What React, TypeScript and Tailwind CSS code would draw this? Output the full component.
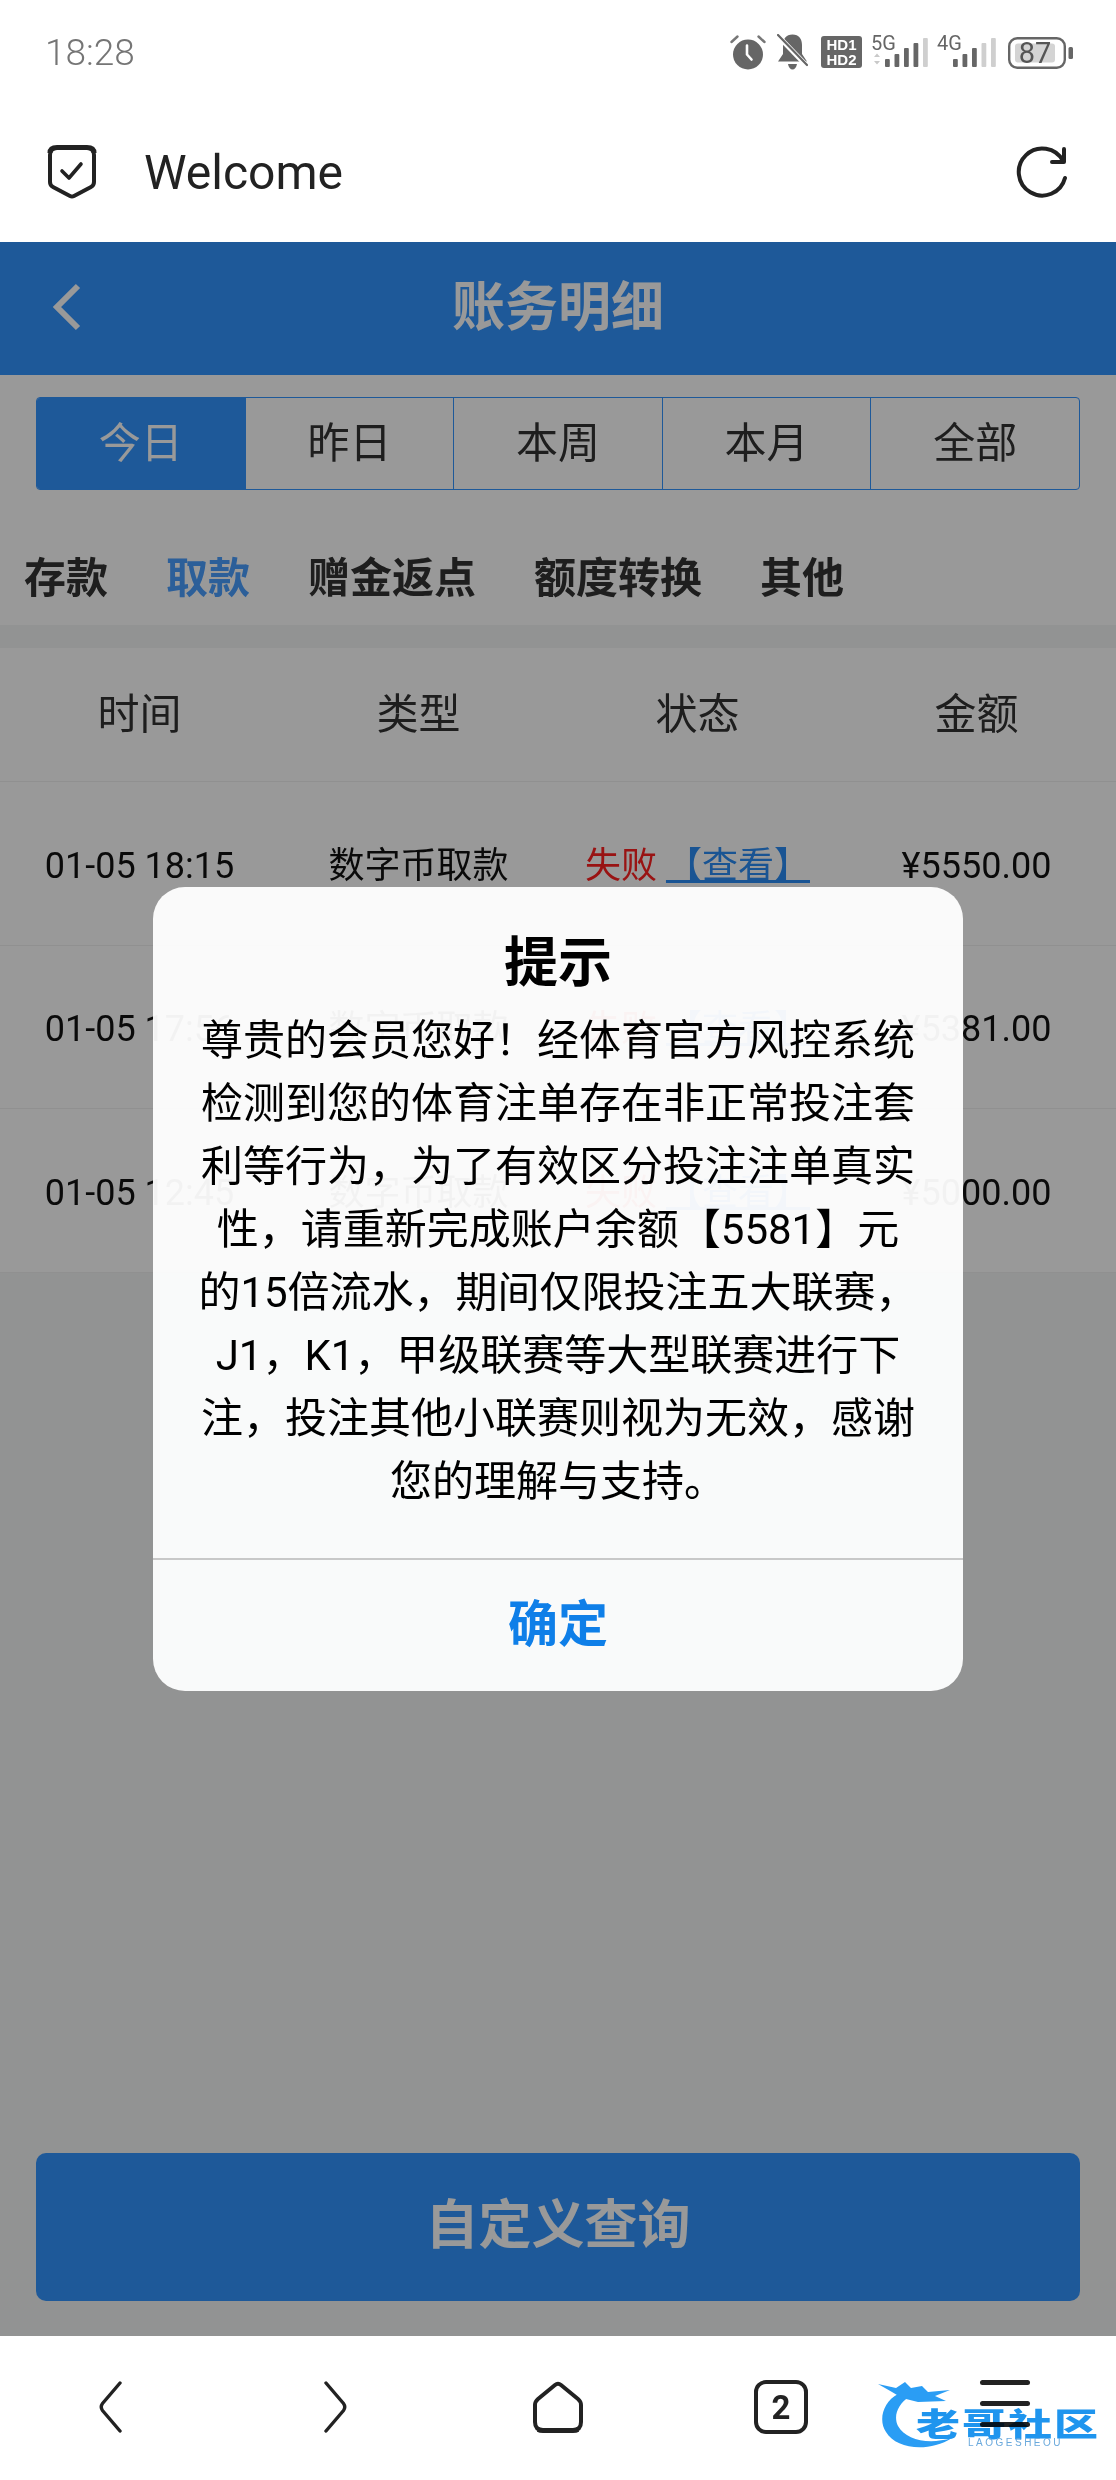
import React from "react";

const CJK = `font-['Roboto','Noto_Sans_CJK_SC',sans-serif]`;

function Alarm() {
  return (
    <svg width="36" height="36" viewBox="0 0 36 36" fill="none">
      <circle cx="18" cy="20.5" r="15" fill="#666" />
      <path d="M17 11.5V20.5L21.5 25.5" stroke="#fff" strokeWidth="2.6" strokeLinecap="round" strokeLinejoin="round" />
      <path d="M1.5 8L7.5 2.5M28.5 2.5L34.5 8" stroke="#777" strokeWidth="2.4" strokeLinecap="round" />
    </svg>
  );
}

function BellOff() {
  return (
    <svg width="31" height="36" viewBox="0 0 31 36" fill="none">
      <path d="M15.5 0.5C22 0.5 25 5 25 11V20L30 27.5H1L6 20V11C6 5 9 0.5 15.5 0.5Z" fill="#666" />
      <path d="M11 30H20C19.5 33.5 17.5 35.5 15.5 35.5C13.5 35.5 11.5 33.5 11 30Z" fill="#666" />
      <path d="M2 3L28 30" stroke="#fff" strokeWidth="5" />
      <path d="M1 1L30 31" stroke="#666" strokeWidth="2.2" strokeLinecap="round" />
    </svg>
  );
}

function Signal({ label, lit, first }: { label: string; lit: number; first: number }) {
  const xs = [0, 9.5, 19, 28.5, 38];
  const hs = [8, 13, 19, 24, 29];
  return (
    <svg width="59" height="36" viewBox="0 0 59 36" fill="none" className="overflow-visible">
      <text x="0" y="16" fontFamily="Roboto" fontSize="20" fill="#666">{label}</text>
      {label === "5G" && <path d="M3 23L6 19.5L9 23ZM3 27L6 30.5L9 27Z" fill="#c9c9c9" />}
      {xs.map((x, i) => (
        <rect key={x} x={first + x} y={33 - hs[i]} width="4.8" height={hs[i]} rx="1" fill={i < lit ? "#666" : "#cfcfcf"} />
      ))}
    </svg>
  );
}

function Battery() {
  return (
    <svg width="66" height="32" viewBox="0 0 66 32" fill="none">
      <rect x="1.2" y="1.2" width="55.6" height="29.6" rx="8" stroke="#666" strokeWidth="2.4" />
      <rect x="7" y="6.5" width="40" height="19" rx="3" fill="#d4d4d4" />
      <rect x="60.5" y="10" width="4.5" height="12" rx="1.5" fill="#666" />
      <text x="27" y="26" textAnchor="middle" fontFamily="Roboto" fontSize="29" fill="#555">87</text>
    </svg>
  );
}

function StatusBar() {
  return (
    <div className="flex h-[100px] items-start bg-white pl-[45px] pr-[42px] pt-[34px]">
      <span className="mt-[1px] text-[37px] leading-[36px] text-[#757575] font-['Roboto',sans-serif] font-light">18:28</span>
      <div className="ml-auto flex items-start">
        <Alarm />
        <div className="ml-[11px]"><BellOff /></div>
        <div className="ml-[13px] mt-[2px] flex h-[32px] w-[41px] flex-col items-center justify-center rounded-[3px] bg-[#666] font-['Liberation_Sans',sans-serif] text-[15px] font-bold leading-[15px] text-white">
          <span>HD1</span>
          <span>HD2</span>
        </div>
        <div className="ml-[9px]"><Signal label="5G" lit={4} first={14} /></div>
        <div className="ml-[7px]"><Signal label="4G" lit={3} first={16} /></div>
        <div className="ml-[12px] mt-[3px]"><Battery /></div>
      </div>
    </div>
  );
}

function BrowserBar() {
  return (
    <div className="flex h-[142px] items-center bg-white pl-[46px] pr-[46px]">
      <svg width="52" height="56" viewBox="0 0 52 56" fill="none" className="mt-[2px]">
        <path d="M4 11C4 6 7 4 11 4H41C45 4 48 6 48 11V38C48 40.5 47 42 45 43L28 52C26.5 52.8 25.5 52.8 24 52L7 43C5 42 4 40.5 4 38V11Z" stroke="#222" strokeWidth="4" />
        <path d="M4 9C4 5 7 3.5 11 3.5H41C45 3.5 48 5 48 9" stroke="#222" strokeWidth="5" />
        <path d="M16 27L23 34L35 20" stroke="#222" strokeWidth="3.6" strokeLinecap="round" strokeLinejoin="round" />
      </svg>
      <span className="ml-[46px] mt-[3px] text-[48px] leading-none text-[#222] font-['Roboto',sans-serif]">Welcome</span>
      <svg width="54" height="54" viewBox="0 0 54 54" fill="none" className="ml-auto">
        <path d="M49 34A23.5 23.5 0 1 1 47 17" stroke="#222" strokeWidth="4" strokeLinecap="round" />
        <path d="M48 5V18H36" stroke="#222" strokeWidth="4" strokeLinecap="round" strokeLinejoin="round" />
      </svg>
    </div>
  );
}

const ranges = ["今日", "昨日", "本周", "本月", "全部"];
const kinds = ["存款", "取款", "赠金返点", "额度转换", "其他"];
const heads = ["时间", "类型", "状态", "金额"];
const rows = [
  ["01-05 18:15", "¥5550.00"],
  ["01-05 17:56", "¥5381.00"],
  ["01-05 12:45", "¥5000.00"],
];

function Page() {
  return (
    <div className={`flex h-full flex-col bg-[#f4f5f5] ${CJK}`}>
      <div className="relative flex h-[133px] shrink-0 items-center justify-center bg-[#3395ff]">
        <svg width="30" height="48" viewBox="0 0 30 48" fill="none" className="absolute left-[52px] top-[41px]">
          <path d="M26 3L5 24L26 45" stroke="#fff" strokeWidth="6" />
        </svg>
        <span className="text-[53px] font-bold leading-none text-white">账务明细</span>
      </div>

      <div className="bg-white px-9 pt-[22px]">
        <div className="flex h-[93px] rounded-[4px] border border-[#3395ff]">
          {ranges.map((r, i) => (
            <div
              key={r}
              className={
                i === 0
                  ? "flex flex-1 items-center justify-center rounded-l-[3px] bg-[#3395ff] text-[42px] text-white"
                  : "flex flex-1 items-center justify-center border-l border-[#3395ff] text-[42px] text-[#333]"
              }
            >
              {r}
            </div>
          ))}
        </div>
      </div>

      <div className="flex h-[135px] shrink-0 items-center gap-[58px] bg-white pl-6 pt-[41px]">
        {kinds.map((k, i) => (
          <span key={k} className={i === 1 ? "text-[42px] font-bold text-[#4a9eff]" : "text-[42px] font-bold text-[#333]"}>
            {k}
          </span>
        ))}
      </div>

      <div className="mt-[23px] bg-white">
        <div className="grid h-[134px] grid-cols-4 items-center border-b border-[#f0f0f0] text-center text-[42px] text-[#333]">
          {heads.map((h) => (
            <span key={h}>{h}</span>
          ))}
        </div>
        {rows.map(([time, amount]) => (
          <div key={time} className="grid h-[163.5px] grid-cols-4 items-center border-b border-[#f0f0f0] pt-[5px] text-center text-[36px] text-[#111]">
            <span>{time}</span>
            <span>数字币取款</span>
            <span className="whitespace-nowrap">
              <span className="text-[#ff2020]">失败</span> <span className="text-[#2a8cf5] underline">【查看】</span>
            </span>
            <span>{amount}</span>
          </div>
        ))}
      </div>

      <div className="mt-auto mb-[35px] px-9">
        <div className="flex h-[148px] items-center justify-center rounded-[10px] bg-[#3395ff] text-[53px] font-bold text-white">
          自定义查询
        </div>
      </div>
    </div>
  );
}

function Dialog() {
  return (
    <div className={`flex h-[804px] w-[810px] flex-col rounded-[32px] bg-white/95 text-center text-black ${CJK}`}>
      <div className="pt-[49px] text-[54px] font-bold leading-[56px]">提示</div>
      <div className="mt-[17px] whitespace-nowrap text-[42px] leading-[63px]">
        尊贵的会员您好！经体育官方风控系统
        <br />
        检测到您的体育注单存在非正常投注套
        <br />
        利等行为，为了有效区分投注注单真实
        <br />
        性，请重新完成账户余额【5581】元
        <br />
        的15倍流水，期间仅限投注五大联赛，
        <br />
        J1，K1，甲级联赛等大型联赛进行下
        <br />
        注，投注其他小联赛则视为无效，感谢
        <br />
        您的理解与支持。
      </div>
      <div className="mt-auto flex h-[133px] items-center justify-center border-t-2 border-[#c8c8c8] text-[50px] font-bold text-[#0f7fe8]">
        确定
      </div>
    </div>
  );
}

function BottomNav() {
  return (
    <div className="relative flex h-[144px] shrink-0 items-start bg-white pt-[44px]">
      <svg width="24" height="54" viewBox="0 0 24 54" fill="none" className="ml-[99px]">
        <path d="M21 3L3.5 23.5Q1 27 3.5 30.5L21 51" stroke="#222" strokeWidth="3.4" strokeLinecap="round" />
      </svg>
      <svg width="24" height="54" viewBox="0 0 24 54" fill="none" className="ml-[200px]">
        <path d="M3 3L20.5 23.5Q23 27 20.5 30.5L3 51" stroke="#222" strokeWidth="3.4" strokeLinecap="round" />
      </svg>
      <svg width="54" height="54" viewBox="0 0 54 54" fill="none" className="ml-[184px]">
        <path d="M24 5Q27 2.5 30 5L47 19Q50 21.5 50 25V42Q50 50 42 50H12Q4 50 4 42V25Q4 21.5 7 19Z" stroke="#222" strokeWidth="4" />
        <path d="M7 49.5Q9 50.5 12 50.5H42Q45 50.5 47 49.5" stroke="#222" strokeWidth="5" />
      </svg>
      <div className="ml-[169px] flex h-[54px] w-[54px] items-center justify-center rounded-[12px] border-[4px] border-[#222] font-['Roboto',sans-serif] text-[33px] font-bold leading-none text-[#222]">
        2
      </div>
      <div className="ml-[172px] mt-[-1px] flex w-[50px] flex-col gap-[16px] pt-[1px]">
        <div className="h-[5px] rounded-full bg-[#222]" />
        <div className="h-[5px] rounded-full bg-[#222]" />
        <div className="h-[5px] rounded-full bg-[#222]" />
      </div>
      <div className="absolute left-[878px] top-[46px] h-[72px] w-[224px] mix-blend-multiply blur-[0.6px]">
        <svg width="84" height="70" viewBox="0 0 84 70" className="absolute left-0 top-0">
          <path d="M20 12C5 20 0 38 8 50C18 67 50 71 74 56C50 63 28 58 20 44C15 34 20 22 31 15Z" fill="#2a9df4" />
          <path d="M0 2L18 6L27 0L33 6L44 4L50 10L72 8L57 14L68 19L40 20L24 16L14 10Z" fill="#2a9df4" />
        </svg>
        <span className="absolute left-[38px] top-[18px] origin-center scale-y-[0.72] whitespace-nowrap font-['Noto_Sans_CJK_SC',sans-serif] text-[44px] font-black leading-[44px] tracking-[2px] text-[#1f95ee]">
          老哥社区
        </span>
        <span className="absolute left-[90px] top-[55px] whitespace-nowrap font-['Liberation_Sans',sans-serif] text-[10px] leading-[12px] tracking-[2.5px] text-[#6aa9dc]">
          LAOGESHEOU
        </span>
      </div>
    </div>
  );
}

export default function App() {
  return (
    <div className="flex h-[2480px] w-[1116px] flex-col overflow-hidden bg-white">
      <StatusBar />
      <BrowserBar />
      <div className="relative min-h-0 flex-1">
        <Page />
        <div className="absolute inset-0 flex items-center justify-center bg-black/40">
          <Dialog />
        </div>
      </div>
      <BottomNav />
    </div>
  );
}
